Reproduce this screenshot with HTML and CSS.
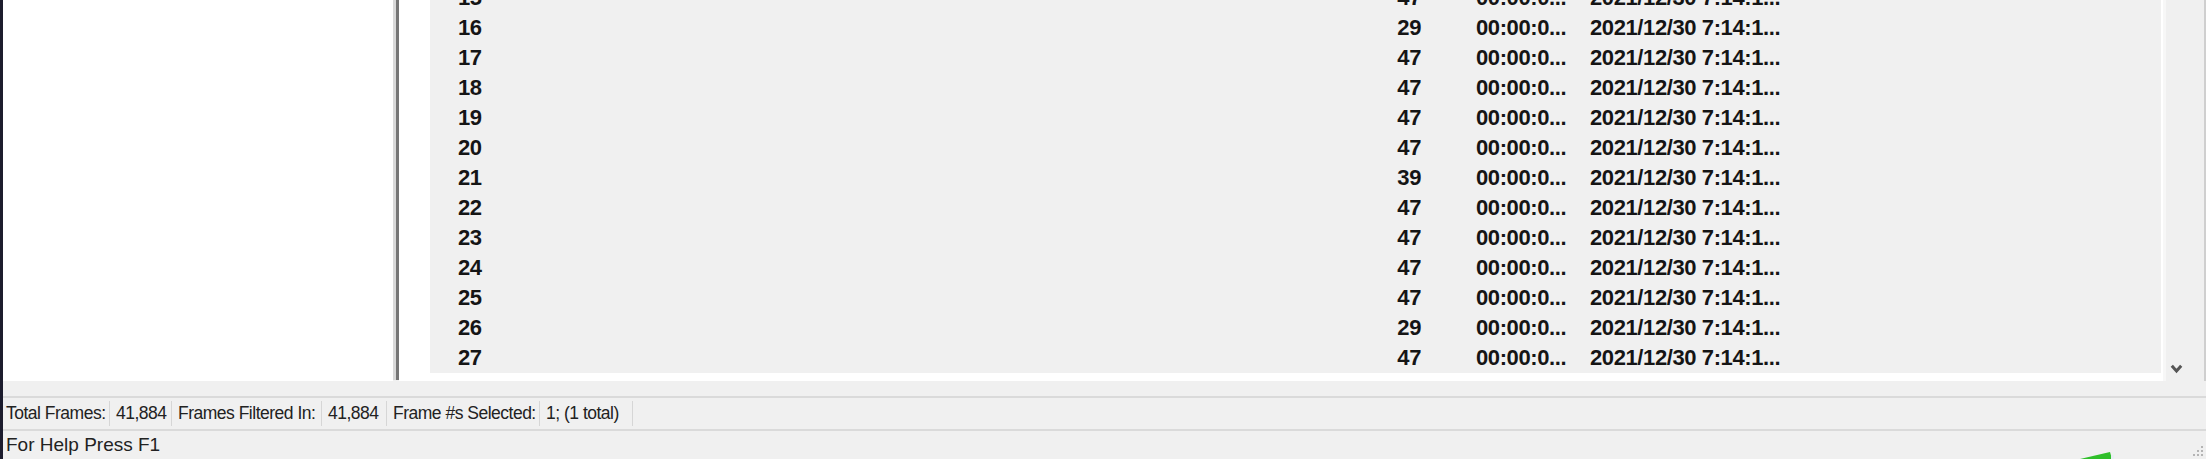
FILE: index.html
```html
<!DOCTYPE html>
<html>
<head>
<meta charset="utf-8">
<link rel="stylesheet" href="styles.css">
</head>
<body>
<div class="app">
  <div class="edge"></div>
  <div class="main">
    <div class="panes">
      <div class="tree"></div>
      <div class="splitter"></div>
      <div class="list">
        <div class="rows">
          <div class="rows-inner">
            <div class="row"><span>15</span><span class="num">47</span><span class="c3">00:00:0...</span><span>2021/12/30 7:14:1...</span></div>
            <div class="row"><span>16</span><span class="num">29</span><span class="c3">00:00:0...</span><span>2021/12/30 7:14:1...</span></div>
            <div class="row"><span>17</span><span class="num">47</span><span class="c3">00:00:0...</span><span>2021/12/30 7:14:1...</span></div>
            <div class="row"><span>18</span><span class="num">47</span><span class="c3">00:00:0...</span><span>2021/12/30 7:14:1...</span></div>
            <div class="row"><span>19</span><span class="num">47</span><span class="c3">00:00:0...</span><span>2021/12/30 7:14:1...</span></div>
            <div class="row"><span>20</span><span class="num">47</span><span class="c3">00:00:0...</span><span>2021/12/30 7:14:1...</span></div>
            <div class="row"><span>21</span><span class="num">39</span><span class="c3">00:00:0...</span><span>2021/12/30 7:14:1...</span></div>
            <div class="row"><span>22</span><span class="num">47</span><span class="c3">00:00:0...</span><span>2021/12/30 7:14:1...</span></div>
            <div class="row"><span>23</span><span class="num">47</span><span class="c3">00:00:0...</span><span>2021/12/30 7:14:1...</span></div>
            <div class="row"><span>24</span><span class="num">47</span><span class="c3">00:00:0...</span><span>2021/12/30 7:14:1...</span></div>
            <div class="row"><span>25</span><span class="num">47</span><span class="c3">00:00:0...</span><span>2021/12/30 7:14:1...</span></div>
            <div class="row"><span>26</span><span class="num">29</span><span class="c3">00:00:0...</span><span>2021/12/30 7:14:1...</span></div>
            <div class="row"><span>27</span><span class="num">47</span><span class="c3">00:00:0...</span><span>2021/12/30 7:14:1...</span></div>
          </div>
        </div>
      </div>
      <div class="vscroll">
        <svg class="chevron" width="13" height="10" viewBox="0 0 13 10"><path d="M1.8 1.8 L6.5 7 L11.2 1.8" fill="none" stroke="#555" stroke-width="3"/></svg>
      </div>
      <div class="rightedge"></div>
    </div>
    <div class="gap"></div>
    <div class="status1">
      <div class="pane first">Total Frames:</div>
      <div class="pane">41,884</div>
      <div class="pane">Frames Filtered In:</div>
      <div class="pane">41,884</div>
      <div class="pane">Frame #s Selected:</div>
      <div class="pane">1; (1 total)</div>
    </div>
    <div class="status2">
      <span class="help">For Help Press F1</span>
      <svg class="grip" width="14" height="14" viewBox="0 0 14 14">
        <rect x="11" y="2" width="2" height="2" fill="#b4b4b4"/>
        <rect x="11" y="6" width="2" height="2" fill="#b4b4b4"/>
        <rect x="7" y="6" width="2" height="2" fill="#b4b4b4"/>
        <rect x="11" y="10" width="2" height="2" fill="#b4b4b4"/>
        <rect x="7" y="10" width="2" height="2" fill="#b4b4b4"/>
        <rect x="3" y="10" width="2" height="2" fill="#b4b4b4"/>
      </svg>
    </div>
  </div>
  <svg class="cursor" width="34" height="7" viewBox="0 0 34 7"><path d="M0 7 L30 0 L32 7 Z" fill="#2fbf2a"/><rect x="31" y="3" width="3" height="4" fill="#e8eef2"/></svg>
</div>
</body>
</html>
```

FILE: styles.css
```css
* { box-sizing: border-box; }
html, body { margin: 0; padding: 0; }
body {
  width: 2206px;
  height: 459px;
  overflow: hidden;
  background: #f0f0f0;
  font-family: "Liberation Sans", Arial, sans-serif;
  color: #1a1a1a;
}
.app {
  display: flex;
  height: 459px;
  position: relative;
}
.edge {
  width: 3px;
  flex: none;
  background: #1c1c2d;
}
.main {
  flex: 1;
  display: flex;
  flex-direction: column;
  min-width: 0;
}
.panes {
  display: flex;
  height: 381px;
  flex: none;
}
.tree {
  width: 390px;
  flex: none;
  background: #ffffff;
}
.splitter {
  width: 6px;
  flex: none;
  border-left: 3px solid #d9d9d9;
  background: #767676;
  height: 380px;
}
.list {
  width: 1764px;
  flex: none;
  background: #ffffff;
  padding: 0 2px 8px 31px;
}
.rows {
  background: #f0f0f0;
  height: 373px;
  overflow: hidden;
}
.rows-inner {
  margin-top: -17px;
}
.row {
  display: grid;
  grid-template-columns: 882px 81px 169px 1fr;
  height: 30px;
  line-height: 30px;
  font-size: 22px;
  letter-spacing: -0.4px;
  font-weight: bold;
  padding-left: 28px;
  white-space: nowrap;
  color: #151515;
}
.row .num { text-align: right; }
.row .c3 { padding-left: 55px; }
.vscroll {
  width: 41px;
  flex: none;
  display: flex;
  align-items: flex-end;
  padding: 0 0 7px 4px;
  border-left: 3px solid #f7f7f7;
}
.chevron { display: block; }
.rightedge {
  width: 2px;
  flex: none;
  background: #cfcfcf;
}
.gap {
  height: 15px;
  flex: none;
}
.status1 {
  height: 33px;
  flex: none;
  border-top: 2px solid #dadada;
  display: grid;
  grid-template-columns: 107px 62px 150px 65px 153px 93px;
  align-items: center;
  font-size: 17.5px;
  letter-spacing: -0.5px;
  color: #222;
}
.pane {
  height: 25px;
  line-height: 25px;
  padding-left: 6px;
  border-right: 1px solid #d6d6d6;
  white-space: nowrap;
  overflow: hidden;
}
.pane.first { padding-left: 3px; }
.status2 {
  height: 30px;
  flex: none;
  border-top: 2px solid #dadada;
  display: flex;
  align-items: center;
  font-size: 19px;
  color: #222;
  padding-left: 3px;
}
.grip {
  margin-left: auto;
  align-self: flex-end;
  margin-right: 2px;
  margin-bottom: 1px;
}
.cursor {
  position: absolute;
  left: 2080px;
  top: 452px;
}
```
